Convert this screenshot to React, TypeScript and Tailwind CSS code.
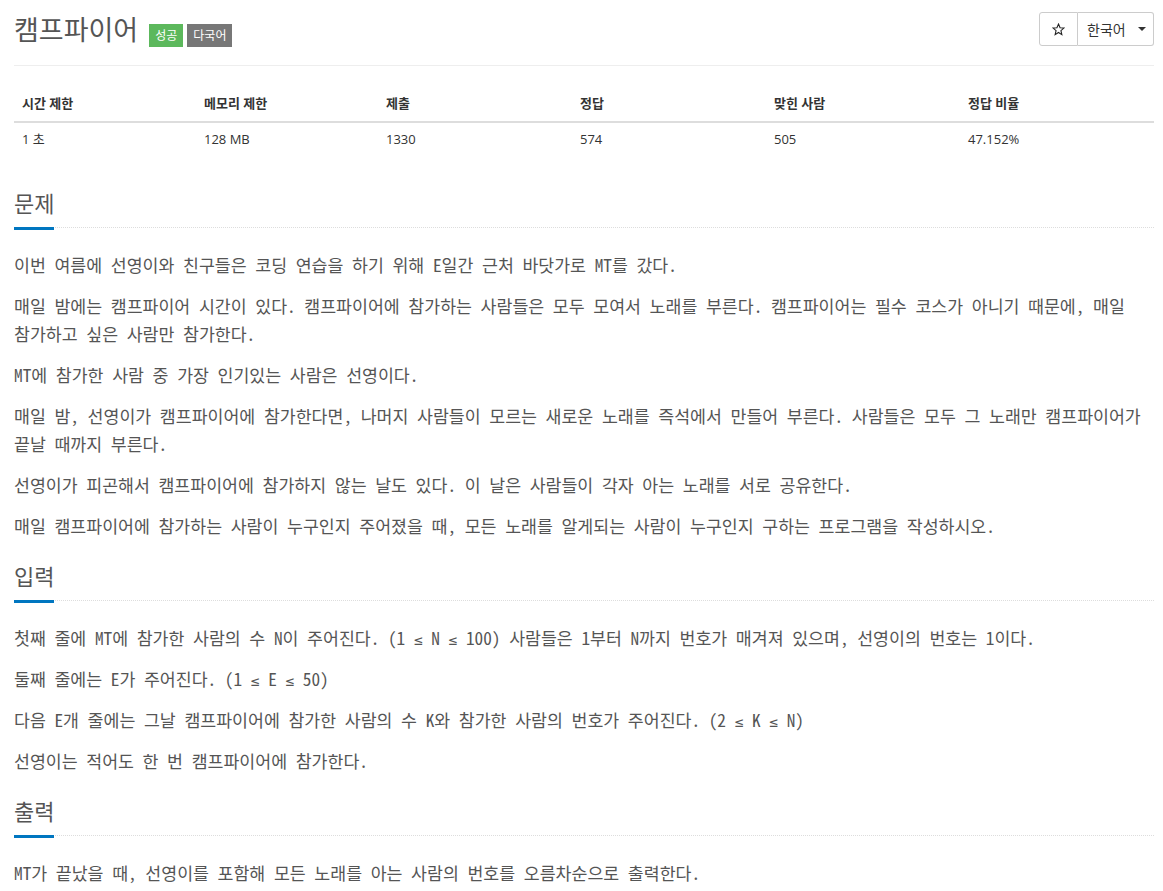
import React from "react";

const sans = { fontFamily: '"Open Sans", "Noto Sans CJK KR", sans-serif' };
const mono = {
  fontFamily: '"Noto Sans Mono CJK KR", "DejaVu Sans Mono", "Noto Sans CJK KR", monospace',
};

function Heading({ children }: { children: React.ReactNode }) {
  return (
    <div className="flex border-b border-dotted border-[#dddddd]">
      <span
        className="text-[22px] leading-[30px] text-[#555555] pb-[9px] mb-[-3px] border-b-[3px] border-[#0076c0]"
        style={sans}
      >
        {children}
      </span>
    </div>
  );
}

function P({ children }: { children: React.ReactNode }) {
  return (
    <p className="text-[17.3px] leading-[28px] text-[#555555] mb-[13px] break-keep" style={mono}>
      {children}
    </p>
  );
}

function Le() {
  return (
    <span className="text-[14.5px] leading-none" style={{ fontFamily: '"DejaVu Sans Mono", monospace' }}>
      ≤
    </span>
  );
}

export default function App() {
  const heads = ["시간 제한", "메모리 제한", "제출", "정답", "맞힌 사람", "정답 비율"];
  const vals = ["1 초", "128 MB", "1330", "574", "505", "47.152%"];
  const widths = ["w-[182px]", "w-[182px]", "w-[194px]", "w-[194px]", "w-[194px]", "w-[194px]"];
  return (
    <div className="bg-white min-h-screen" style={sans}>
      <div className="ml-[14px] w-[1140px]">
        <div className="flex justify-between items-start pt-[10px] h-[66px] border-b border-[#eeeeee]">
          <div className="flex items-start">
            <h1 className="text-[27px] leading-[40px] text-[#555555]">캠프파이어</h1>
            <span className="ml-[11px] mt-[14px] h-[23px] px-[6px] flex items-center bg-[#5cb85c] text-white text-[12px]">
              성공
            </span>
            <span className="ml-[4px] mt-[14px] h-[23px] px-[6px] flex items-center bg-[#777777] text-white text-[12px]">
              다국어
            </span>
          </div>
          <div className="flex mt-[2px] h-[34px]">
            <div className="w-[39px] h-full border border-[#cccccc] rounded-l-[3px] flex items-center justify-center text-[#222]">
              <svg width="13" height="13" viewBox="0 0 24 24" fill="none" stroke="#222" strokeWidth="2" strokeLinejoin="miter">
                <polygon points="12,2 14.9,8.9 22,9.3 16.5,14 18.2,21.5 12,17.5 5.8,21.5 7.5,14 2,9.3 9.1,8.9" />
              </svg>
            </div>
            <div className="w-[76px] h-full border border-l-0 border-[#cccccc] rounded-r-[3px] flex items-center pl-[9px] text-[14px] text-[#333]">
              <span>한국어</span>
              <span className="ml-[12px] w-0 h-0 border-l-[4px] border-r-[4px] border-t-[4px] border-l-transparent border-r-transparent border-t-[#333]" />
            </div>
          </div>
        </div>

        <div className="mt-[19px]">
          <div className="flex border-b-2 border-[#dddddd]">
            {heads.map((h, i) => (
              <div key={i} className={`${widths[i]} px-[8px] py-[8px] text-[13px] leading-[20px] font-bold text-[#333333]`}>
                {h}
              </div>
            ))}
          </div>
          <div className="flex">
            {vals.map((v, i) => (
              <div key={i} className={`${widths[i]} px-[8px] py-[6px] text-[13px] leading-[20px] text-[#333333]`}>
                {v}
              </div>
            ))}
          </div>
        </div>

        <div className="mt-[33px]">
          <Heading>문제</Heading>
          <div className="mt-[23px]">
            <P>이번 여름에 선영이와 친구들은 코딩 연습을 하기 위해 E일간 근처 바닷가로 MT를 갔다.</P>
            <P>
              매일 밤에는 캠프파이어 시간이 있다. 캠프파이어에 참가하는 사람들은 모두 모여서 노래를 부른다. 캠프파이어는 필수 코스가 아니기 때문에, 매일 참가하고 싶은 사람만 참가한다.
            </P>
            <P>MT에 참가한 사람 중 가장 인기있는 사람은 선영이다.</P>
            <P>
              매일 밤, 선영이가 캠프파이어에 참가한다면, 나머지 사람들이 모르는 새로운 노래를 즉석에서 만들어 부른다. 사람들은 모두 그 노래만 캠프파이어가 끝날 때까지 부른다.
            </P>
            <P>선영이가 피곤해서 캠프파이어에 참가하지 않는 날도 있다. 이 날은 사람들이 각자 아는 노래를 서로 공유한다.</P>
            <P>매일 캠프파이어에 참가하는 사람이 누구인지 주어졌을 때, 모든 노래를 알게되는 사람이 누구인지 구하는 프로그램을 작성하시오.</P>
          </div>
        </div>

        <div className="mt-[21px]">
          <Heading>입력</Heading>
          <div className="mt-[23px]">
            <P>
              첫째 줄에 MT에 참가한 사람의 수 N이 주어진다. (1 <Le /> N <Le /> 100) 사람들은 1부터 N까지 번호가 매겨져 있으며, 선영이의 번호는 1이다.
            </P>
            <P>
              둘째 줄에는 E가 주어진다. (1 <Le /> E <Le /> 50)
            </P>
            <P>
              다음 E개 줄에는 그날 캠프파이어에 참가한 사람의 수 K와 참가한 사람의 번호가 주어진다. (2 <Le /> K <Le /> N)
            </P>
            <P>선영이는 적어도 한 번 캠프파이어에 참가한다.</P>
          </div>
        </div>

        <div className="mt-[21px]">
          <Heading>출력</Heading>
          <div className="mt-[23px]">
            <P>MT가 끝났을 때, 선영이를 포함해 모든 노래를 아는 사람의 번호를 오름차순으로 출력한다.</P>
          </div>
        </div>
      </div>
    </div>
  );
}
